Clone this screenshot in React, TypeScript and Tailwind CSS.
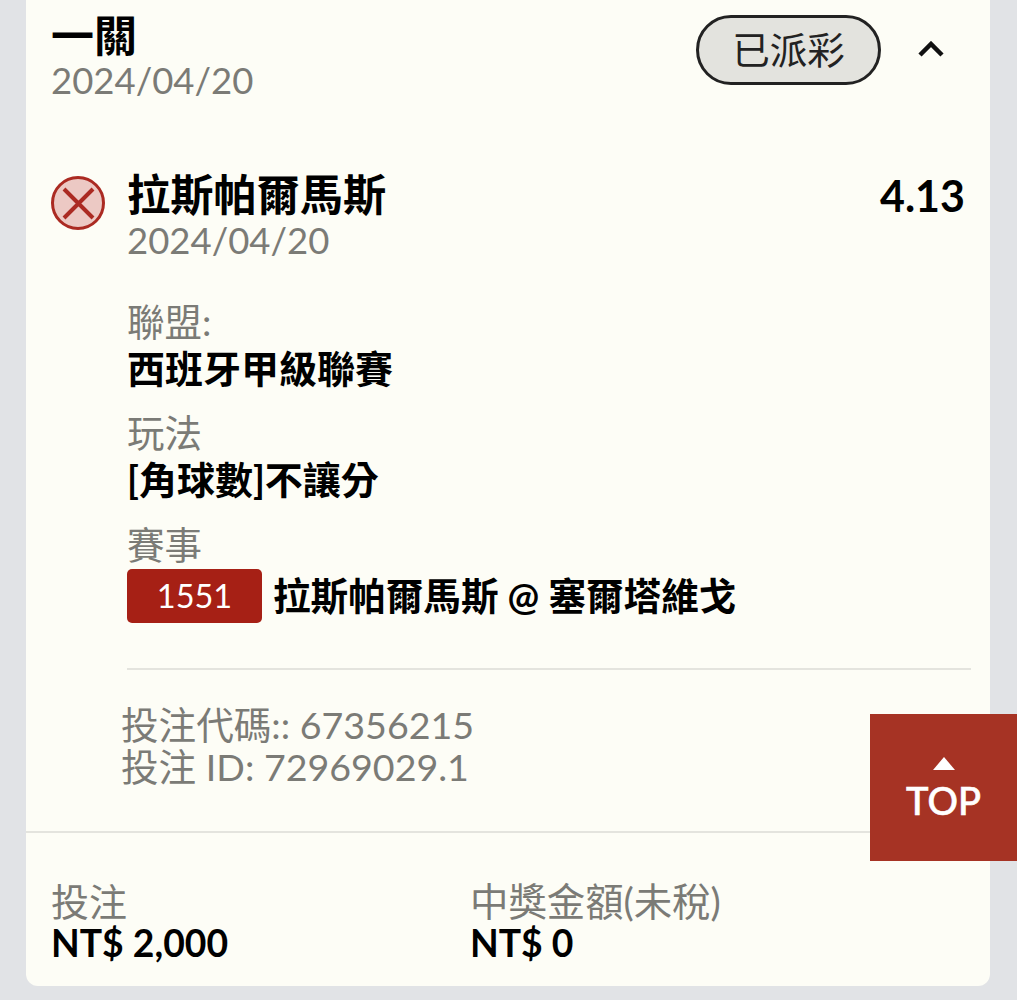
const font = "font-['Lato','Noto_Sans_CJK_TC',sans-serif]";

function Field({ label, value }: { label: string; value: string }) {
    return (
        <div className="mb-[18px]">
            <p className="text-[37.5px] leading-[47px] text-[#7b7b76]">{label}</p>
            <p className="text-[38px] leading-[46px] font-bold text-black">{value}</p>
        </div>
    );
}

export default function App() {
    return (
        <div className={`${font} relative h-[1000px] w-[1017px] overflow-hidden bg-[#e1e3e6]`}>
            {/* Card */}
            <div className="ml-[26px] h-[986px] w-[964px] rounded-b-[12px] bg-[#fdfdf6]">
                {/* Header */}
                <div className="flex items-start justify-between pl-[25px] pr-[46px] pt-[13px]">
                    <div>
                        <p className="text-[43px] leading-[46px] font-bold text-black">一關</p>
                        <p className="text-[36.5px] leading-[43px] text-[#7b7b76]">2024/04/20</p>
                    </div>
                    <div className="flex items-center gap-[37px] pt-[2px]">
                        <span className="flex h-[70px] w-[185px] items-center justify-center rounded-full border-[3px] border-[#222] bg-[#e3e3de] text-[37.5px] text-[#222]">
                            已派彩
                        </span>
                        <svg width="26" height="16" viewBox="0 0 26 16" fill="none" stroke="#111" strokeWidth="4.5" className="-mt-[2px]">
                            <path d="M2 14 L13 3 L24 14" />
                        </svg>
                    </div>
                </div>

                {/* Selection */}
                <div className="mt-[67px] flex pl-[25px] pr-[25px]">
                    <div className="mt-[7px] flex h-[54px] w-[54px] shrink-0 items-center justify-center rounded-full border-[3px] border-[#ab2a22] bg-[#ecc9c4]">
                        <svg width="35" height="35" viewBox="0 0 35 35" stroke="#ab2a22" strokeWidth="4">
                            <path d="M3 3 L32 32 M32 3 L3 32" />
                        </svg>
                    </div>
                    <div className="ml-[22px] flex-1">
                        <div className="flex items-start justify-between">
                            <div>
                                <p className="text-[43.2px] leading-[50px] font-bold text-black">拉斯帕爾馬斯</p>
                                <p className="text-[36.5px] leading-[43px] text-[#7b7b76]">2024/04/20</p>
                            </div>
                            <span className="mt-[2px] text-[43px] leading-[50px] font-bold text-black">4.13</span>
                        </div>

                        <div className="mt-[36px]">
                            <Field label="聯盟:" value="西班牙甲級聯賽" />
                            <Field label="玩法" value="[角球數]不讓分" />
                            <div className="pt-[2px]">
                                <p className="text-[37.5px] leading-[46px] text-[#7b7b76]">賽事</p>
                                <div className="flex items-center">
                                    <span className="flex h-[54px] w-[135px] items-center justify-center rounded-[5px] bg-[#a62015] text-[32.5px] text-white">
                                        1551
                                    </span>
                                    <span className="ml-[11px] text-[37.6px] font-bold text-black">拉斯帕爾馬斯 @ 塞爾塔維戈</span>
                                </div>
                            </div>
                        </div>
                    </div>
                </div>

                {/* Divider */}
                <div className="ml-[101px] mr-[19px] mt-[44px] h-[2px] bg-[#e4e4de]" />

                {/* Bet ids */}
                <div className="mt-[34px] pl-[95px] text-[37.6px] leading-[42px] text-[#7b7b76]">
                    <p>投注代碼:: 67356215</p>
                    <p>投注 ID: 72969029.1</p>
                </div>

                <div className="mt-[43px] h-[2px] bg-[#e4e4de]" />

                {/* Totals */}
                <div className="flex pl-[25px] pt-[47px]">
                    <div className="w-[419px]">
                        <p className="text-[38px] leading-[42px] text-[#7b7b76]">投注</p>
                        <p className="text-[37.3px] leading-[41px] font-bold text-black">NT$ 2,000</p>
                    </div>
                    <div>
                        <p className="text-[38.4px] leading-[42px] text-[#7b7b76]">中獎金額(未稅)</p>
                        <p className="text-[37.3px] leading-[41px] font-bold text-black">NT$ 0</p>
                    </div>
                </div>
            </div>

            {/* Scroll to top */}
            <button className="absolute left-[870px] top-[714px] flex h-[147px] w-[147px] flex-col items-center justify-center bg-[#a63324] pt-[4px] text-white">
                <svg width="22" height="13" viewBox="0 0 22 13" fill="#fff">
                    <path d="M11 0 L22 13 H0 Z" />
                </svg>
                <span className="mt-[8px] text-[38px] leading-[44px] font-medium [-webkit-text-stroke:0.6px_white]">TOP</span>
            </button>
        </div>
    );
}
